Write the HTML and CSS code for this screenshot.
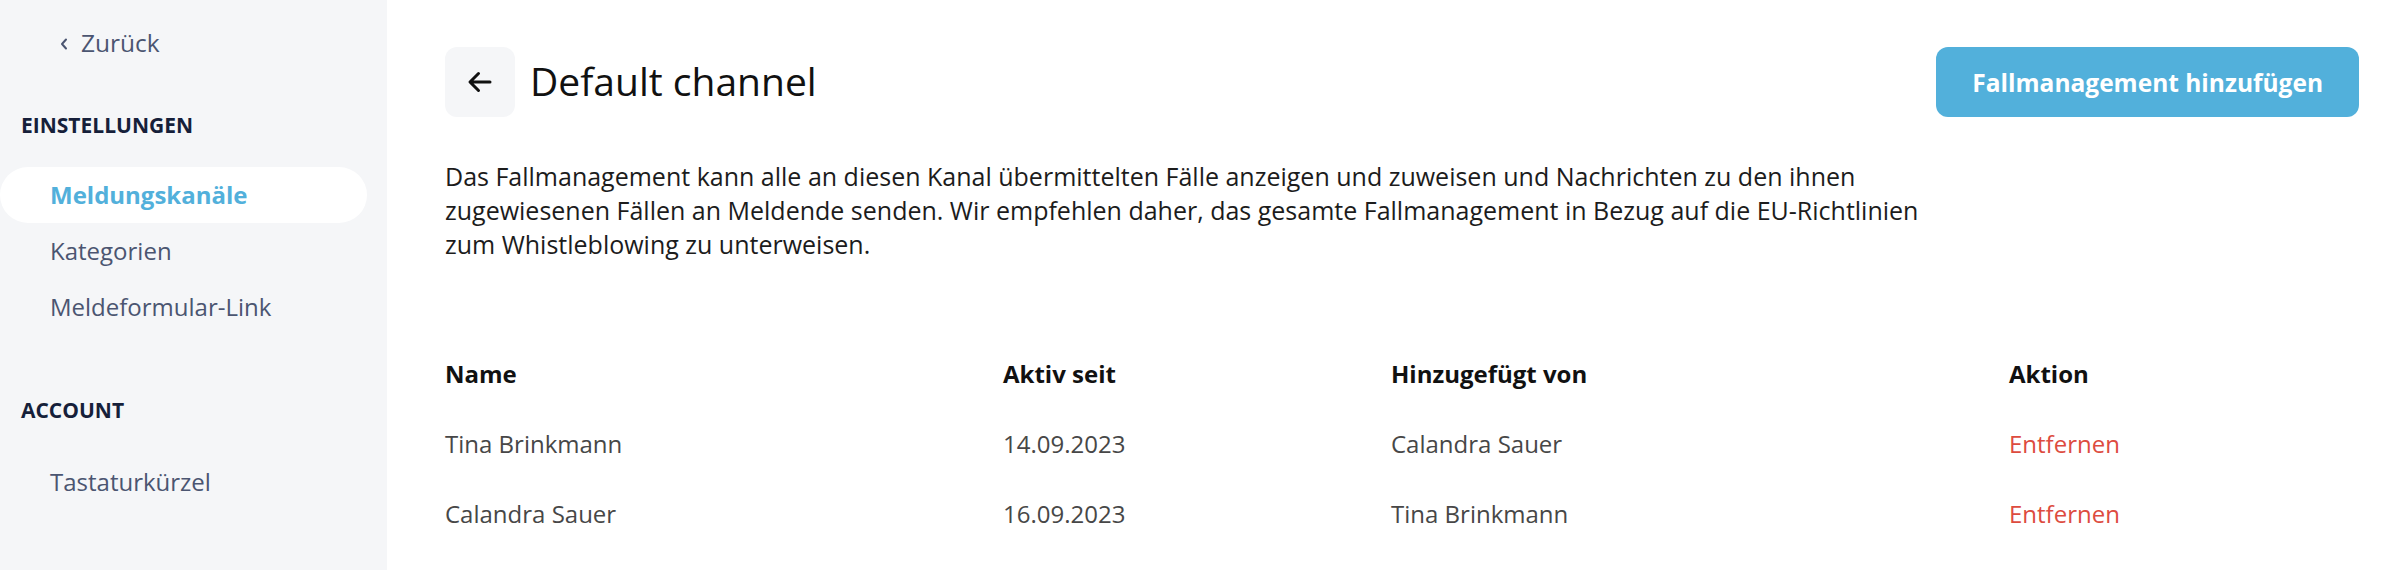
FILE: index.html
```html
<!DOCTYPE html>
<html lang="de">
<head>
  <meta charset="UTF-8">
  <meta name="viewport" content="width=device-width, initial-scale=1.0">
  <title>Default channel - Einstellungen</title>
  <link rel="stylesheet" href="styles.css">
</head>
<body>
  <div class="layout">
    <aside class="sidebar">
      <a href="#" class="back-link">
        <svg class="chevron" width="10" height="14" viewBox="0 0 10 14" aria-hidden="true">
          <polyline points="7,2.5 3,7 7,11.5" fill="none" stroke="currentColor" stroke-width="2" stroke-linecap="round" stroke-linejoin="round"/>
        </svg>
        Zurück
      </a>

      <h4 class="section-title">EINSTELLUNGEN</h4>
      <nav class="nav-list">
        <a href="#" class="nav-item active">Meldungskanäle</a>
        <a href="#" class="nav-item">Kategorien</a>
        <a href="#" class="nav-item">Meldeformular-Link</a>
      </nav>

      <h4 class="section-title account">ACCOUNT</h4>
      <nav class="nav-list">
        <a href="#" class="nav-item">Tastaturkürzel</a>
      </nav>
    </aside>

    <main class="content">
      <div class="page-head">
        <div class="title-group">
          <button class="icon-button" aria-label="Zurück">
            <svg width="26" height="22" viewBox="0 0 26 22" aria-hidden="true">
              <path d="M23 11H3.5M11.5 2.5L3 11l8.5 8.5" fill="none" stroke="currentColor" stroke-width="3" stroke-linecap="round" stroke-linejoin="round"/>
            </svg>
          </button>
          <h1>Default channel</h1>
        </div>
        <button class="cta-button">Fallmanagement hinzufügen</button>
      </div>

      <p class="intro">Das Fallmanagement kann alle an diesen Kanal übermittelten Fälle anzeigen und zuweisen und Nachrichten zu den ihnen zugewiesenen Fällen an Meldende senden. Wir empfehlen daher, das gesamte Fallmanagement in Bezug auf die EU-Richtlinien zum Whistleblowing zu unterweisen.</p>

      <table class="members">
        <thead>
          <tr>
            <th class="col-name">Name</th>
            <th class="col-date">Aktiv seit</th>
            <th class="col-added">Hinzugefügt von</th>
            <th>Aktion</th>
          </tr>
        </thead>
        <tbody>
          <tr>
            <td>Tina Brinkmann</td>
            <td>14.09.2023</td>
            <td>Calandra Sauer</td>
            <td><a href="#" class="remove">Entfernen</a></td>
          </tr>
          <tr>
            <td>Calandra Sauer</td>
            <td>16.09.2023</td>
            <td>Tina Brinkmann</td>
            <td><a href="#" class="remove">Entfernen</a></td>
          </tr>
        </tbody>
      </table>
    </main>
  </div>
</body>
</html>
```

FILE: styles.css
```css
:root {
  --sidebar-bg: #f5f6f8;
  --nav-color: #4b5571;
  --heading-color: #161f3a;
  --primary-color: #52b0db;
  --danger-color: #dd4b3f;
  --text-color: #1c1c1c;
  --muted-text: #474747;
}

* {
  box-sizing: border-box;
}

body {
  margin: 0;
  padding: 0;
  font-family: "Open Sans", "Noto Sans", sans-serif;
  font-size: 24px;
  color: var(--text-color);
  background: white;
}

a {
  text-decoration: none;
}

.layout {
  display: flex;
  min-height: 100vh;
}

/* Sidebar */

.sidebar {
  width: 387px;
  flex-shrink: 0;
  background: var(--sidebar-bg);
  padding: 26px 20px 0 0;
}

.back-link {
  display: flex;
  align-items: center;
  gap: 12px;
  padding-left: 59px;
  line-height: 34px;
  font-size: 24.5px;
  color: var(--nav-color);
}

.chevron {
  margin-top: 2px;
}

.section-title {
  margin: 50px 0 27px;
  padding-left: 21px;
  font-size: 21px;
  line-height: 30px;
  font-weight: bold;
  color: var(--heading-color);
}

.section-title.account {
  margin-top: 60px;
  margin-bottom: 29px;
}

.nav-list {
  display: flex;
  flex-direction: column;
}

.nav-item {
  display: block;
  height: 56px;
  line-height: 56px;
  padding-left: 50px;
  color: var(--nav-color);
}

.nav-item.active {
  background: white;
  border-radius: 28px;
  color: var(--primary-color);
  font-weight: bold;
}

/* Main content */

.content {
  flex: 1;
  padding: 47px 41px 0 58px;
}

.page-head {
  display: flex;
  justify-content: space-between;
  align-items: center;
}

.title-group {
  display: flex;
  align-items: center;
  gap: 15px;
}

.icon-button {
  width: 70px;
  height: 70px;
  border: none;
  border-radius: 12px;
  background: var(--sidebar-bg);
  color: #111;
  display: flex;
  align-items: center;
  justify-content: center;
  padding: 0;
  cursor: pointer;
}

.title-group h1 {
  margin: 0 0 4px;
  font-size: 39px;
  font-weight: normal;
  color: #111;
}

.cta-button {
  height: 70px;
  padding: 0 36px;
  border: none;
  border-radius: 12px;
  background: var(--primary-color);
  color: white;
  font-family: inherit;
  font-size: 24.5px;
  font-weight: bold;
  cursor: pointer;
}

.intro {
  max-width: 1500px;
  margin: 42px 0 0;
  font-size: 25px;
  line-height: 34px;
}

.members {
  width: 100%;
  margin-top: 78px;
  border-collapse: collapse;
  table-layout: fixed;
}

.members th,
.members td {
  text-align: left;
  padding: 18px 0;
  line-height: 34px;
}

.members th {
  font-weight: bold;
  color: #111;
}

.members td {
  color: var(--muted-text);
}

.col-name {
  width: 558px;
}

.col-date {
  width: 388px;
}

.col-added {
  width: 618px;
}

.remove {
  color: var(--danger-color);
}
```
